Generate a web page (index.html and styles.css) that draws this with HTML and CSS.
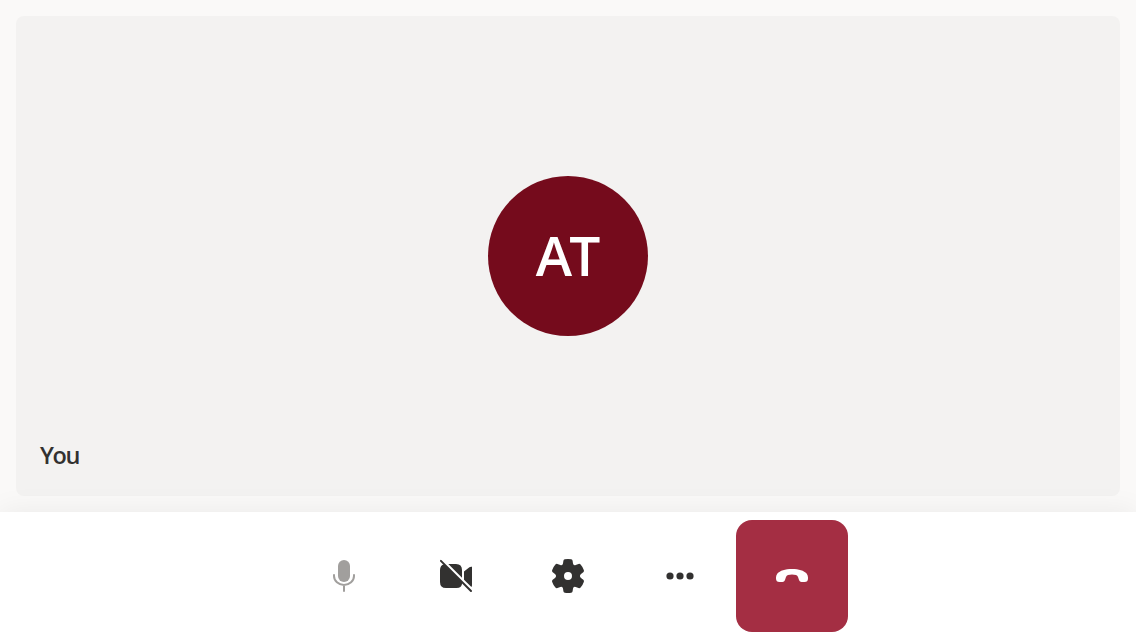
FILE: index.html
```html
<!DOCTYPE html>
<html lang="en">
<head>
<meta charset="utf-8">
<title>Call</title>
<link rel="stylesheet" href="styles.css">
</head>
<body>
<main class="stage">
  <section class="tile">
    <div class="avatar"><span class="initials">AT</span></div>
    <span class="name">You</span>
  </section>
</main>
<nav class="controls">
  <button class="control disabled" aria-label="Microphone">
    <svg class="icon" viewBox="0 0 40 40"><rect x="14" y="4" width="12" height="22" rx="6" fill="currentColor"/><path d="M10 19v1a10 9 0 0 0 20 0v-1M20 29v6" fill="none" stroke="currentColor" stroke-width="2" stroke-linecap="round"/></svg>
  </button>
  <button class="control" aria-label="Camera off">
    <svg class="icon" viewBox="0 0 40 40"><path d="M8 8.2 26.2 26.4Q26 32 20.5 32H10Q4 32 4 26V14Q4 9.5 8 8.2ZM12.3 8H20Q26 8 26 14V21.7ZM28 15.5 33.4 11.3Q34.4 10.5 36 10.8V29.2Q35.9 30.2 35.4 31L28 23.7Z" fill="currentColor"/><path d="M4.9 4.9 35 35" fill="none" stroke="currentColor" stroke-width="2" stroke-linecap="round"/></svg>
  </button>
  <button class="control" aria-label="Settings">
    <svg class="icon" viewBox="0 0 40 40"><path fill="currentColor" fill-rule="evenodd" d="M16.8 3.3Q20 2.7 23.2 3.3Q24.4 3.5 24.6 4.7L25 7.6Q25.4 9.9 27.7 9.1L30.5 8Q31.7 7.5 32.6 8.5Q34.9 11.1 35.9 14.2Q36.3 15.4 35.3 16.2L33 18Q30.9 20 33 22L35.3 23.8Q36.3 24.6 35.9 25.8Q34.9 28.9 32.6 31.5Q31.7 32.5 30.5 32L27.7 30.9Q25.4 30.1 25 32.4L24.6 35.3Q24.4 36.5 23.2 36.7Q20 37.3 16.8 36.7Q15.6 36.5 15.4 35.3L15 32.4Q14.6 30.1 12.3 30.9L9.5 32Q8.3 32.5 7.4 31.5Q5.1 28.9 4.1 25.8Q3.7 24.6 4.7 23.8L7 22Q9.1 20 7 18L4.7 16.2Q3.7 15.4 4.1 14.2Q5.1 11.1 7.4 8.5Q8.3 7.5 9.5 8L12.3 9.1Q14.6 9.9 15 7.6L15.4 4.7Q15.6 3.5 16.8 3.3ZM20 16a4 4 0 1 0 0 8 4 4 0 0 0 0-8Z"/></svg>
  </button>
  <button class="control" aria-label="More">
    <svg class="icon" viewBox="0 0 40 40" fill="currentColor"><circle cx="10" cy="20" r="3.6"/><circle cx="20" cy="20" r="3.6"/><circle cx="30" cy="20" r="3.6"/></svg>
  </button>
  <button class="control leave" aria-label="Leave">
    <svg class="icon" viewBox="0 0 40 40"><path fill="currentColor" d="M20 13C27 13 32 14.7 34.6 17.6Q36 19.4 36 21.5V22.5Q36 26 32.5 26H29.5Q27.7 26 27.1 24.3L26 20.9Q25.5 19.2 24 18.9Q20 18.3 16 18.9Q14.5 19.2 14 20.9L12.9 24.3Q12.3 26 10.5 26H7.5Q4 26 4 22.5V21.5Q4 19.4 5.4 17.6C8 14.7 13 13 20 13Z"/></svg>
  </button>
</nav>
</body>
</html>
```
FILE: styles.css
```css
* { box-sizing: border-box; }
body {
  margin: 0;
  height: 640px;
  display: flex;
  flex-direction: column;
  overflow: hidden;
  background: #faf9f8;
  color: #323130;
  font-family: "Open Sans", sans-serif;
}
.stage { height: 512px; padding: 16px; }
.tile {
  height: 100%;
  display: grid;
  grid-template: 1fr / 1fr;
  background: #f3f2f1;
  border-radius: 8px;
}
.avatar, .name { grid-area: 1 / 1; }
.avatar {
  place-self: center;
  width: 160px;
  height: 160px;
  display: grid;
  place-items: center;
  border-radius: 50%;
  background: #750b1c;
  color: #fff;
}
.initials {
  padding-bottom: 2px;
  font-size: 55px;
  font-weight: 600;
  letter-spacing: -3px;
  margin-right: 3px;
  line-height: 80px;
}
.name {
  place-self: end start;
  margin: 0 0 25px 24px;
  font-size: 23.5px;
  font-weight: 600;
  letter-spacing: -1.4px;
  line-height: 32px;
}
.controls {
  height: 128px;
  padding: 8px;
  display: flex;
  justify-content: center;
  position: relative;
  background: #fff;
  box-shadow: 0 0 28px rgba(0, 0, 0, .065);
}
.control {
  width: 112px;
  height: 112px;
  padding: 0;
  display: grid;
  place-items: center;
  border: 0;
  border-radius: 16px;
  background: transparent;
  color: #323130;
}
.disabled { color: #a19f9d; }
.leave { background: #a42e43; color: #fff; }
.icon { width: 40px; height: 40px; display: block; }
```
